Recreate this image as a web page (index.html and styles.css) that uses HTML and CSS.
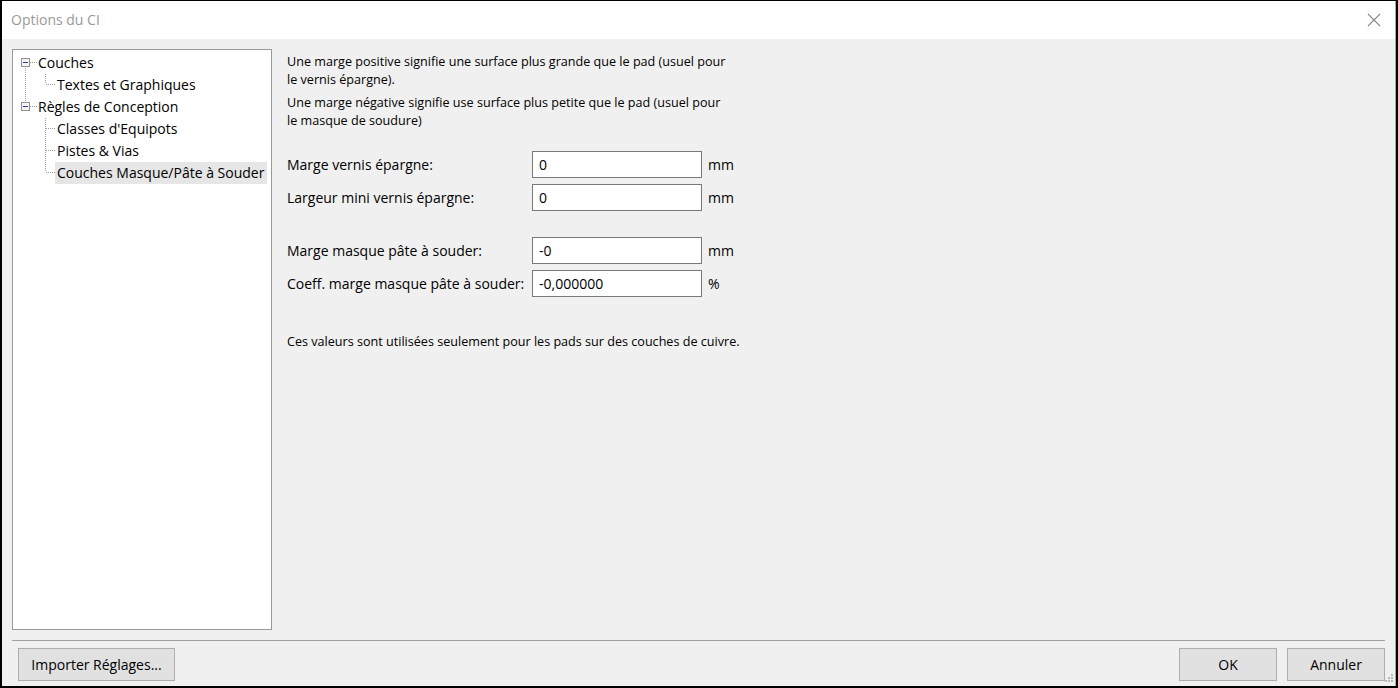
FILE: index.html
```html
<!DOCTYPE html>
<html lang="fr">
<head>
<meta charset="utf-8">
<title>Options du CI</title>
<link rel="stylesheet" href="styles.css">
</head>
<body>
<div class="window">
  <div class="titlebar">
    <span class="title">Options du CI</span>
    <svg class="close" width="14" height="14" viewBox="0 0 14 14"><path d="M1 1 L13 13 M13 1 L1 13" stroke="#8a8a8a" stroke-width="1.1" fill="none"/></svg>
  </div>
  <div class="main">
    <div class="tree">
      <div class="row">
        <svg class="lines top" width="25" height="22" viewBox="0 0 25 22" shape-rendering="crispEdges">
          <rect x="8.5" y="6.5" width="8" height="8" fill="#f4f4f4" stroke="#919191"/>
          <line x1="10" y1="10.5" x2="15" y2="10.5" stroke="#2a3f8f"/>
          <line x1="17" y1="10.5" x2="24" y2="10.5" stroke="#a0a0a0" stroke-dasharray="1 1"/>
          <line x1="12.5" y1="16" x2="12.5" y2="22" stroke="#a0a0a0" stroke-dasharray="1 1"/>
        </svg>
        <span class="label">Couches</span>
      </div>
      <div class="row">
        <svg class="lines" width="44" height="22" viewBox="0 0 44 22" shape-rendering="crispEdges">
          <line x1="12.5" y1="0" x2="12.5" y2="22" stroke="#a0a0a0" stroke-dasharray="1 1"/>
          <line x1="32.5" y1="0" x2="32.5" y2="10" stroke="#a0a0a0" stroke-dasharray="1 1"/>
          <line x1="33" y1="10.5" x2="42" y2="10.5" stroke="#a0a0a0" stroke-dasharray="1 1"/>
        </svg>
        <span class="label">Textes et Graphiques</span>
      </div>
      <div class="row">
        <svg class="lines top" width="25" height="22" viewBox="0 0 25 22" shape-rendering="crispEdges">
          <line x1="12.5" y1="0" x2="12.5" y2="6" stroke="#a0a0a0" stroke-dasharray="1 1"/>
          <rect x="8.5" y="6.5" width="8" height="8" fill="#f4f4f4" stroke="#919191"/>
          <line x1="10" y1="10.5" x2="15" y2="10.5" stroke="#2a3f8f"/>
          <line x1="17" y1="10.5" x2="24" y2="10.5" stroke="#a0a0a0" stroke-dasharray="1 1"/>
        </svg>
        <span class="label">Règles de Conception</span>
      </div>
      <div class="row">
        <svg class="lines" width="44" height="22" viewBox="0 0 44 22" shape-rendering="crispEdges">
          <line x1="32.5" y1="0" x2="32.5" y2="22" stroke="#a0a0a0" stroke-dasharray="1 1"/>
          <line x1="33" y1="10.5" x2="42" y2="10.5" stroke="#a0a0a0" stroke-dasharray="1 1"/>
        </svg>
        <span class="label">Classes d'Equipots</span>
      </div>
      <div class="row">
        <svg class="lines" width="44" height="22" viewBox="0 0 44 22" shape-rendering="crispEdges">
          <line x1="32.5" y1="0" x2="32.5" y2="22" stroke="#a0a0a0" stroke-dasharray="1 1"/>
          <line x1="33" y1="10.5" x2="42" y2="10.5" stroke="#a0a0a0" stroke-dasharray="1 1"/>
        </svg>
        <span class="label">Pistes &amp; Vias</span>
      </div>
      <div class="row">
        <svg class="lines" width="44" height="22" viewBox="0 0 44 22" shape-rendering="crispEdges">
          <line x1="32.5" y1="0" x2="32.5" y2="10" stroke="#a0a0a0" stroke-dasharray="1 1"/>
          <line x1="33" y1="10.5" x2="42" y2="10.5" stroke="#a0a0a0" stroke-dasharray="1 1"/>
        </svg>
        <span class="label selected">Couches Masque/Pâte à Souder</span>
      </div>
    </div>
    <div class="panel">
      <p class="note">Une marge positive signifie une surface plus grande que le pad (usuel pour<br>le vernis épargne).</p>
      <p class="note second">Une marge négative signifie use surface plus petite que le pad (usuel pour<br>le masque de soudure)</p>
      <div class="form first">
        <label>Marge vernis épargne:</label><input type="text" value="0"><span class="unit">mm</span>
        <label>Largeur mini vernis épargne:</label><input type="text" value="0"><span class="unit">mm</span>
      </div>
      <div class="form group2">
        <label>Marge masque pâte à souder:</label><input type="text" value="-0"><span class="unit">mm</span>
        <label>Coeff. marge masque pâte à souder:</label><input type="text" value="-0,000000"><span class="unit">%</span>
      </div>
      <p class="note foot">Ces valeurs sont utilisées seulement pour les pads sur des couches de cuivre.</p>
    </div>
  </div>
  <div class="sep"></div>
  <div class="footer">
    <button class="btn import">Importer Réglages...</button>
    <div class="spacer"></div>
    <button class="btn">OK</button>
    <button class="btn">Annuler</button>
    <svg class="grip" width="12" height="12" viewBox="0 0 12 12" shape-rendering="crispEdges">
      <rect x="9" y="1" width="2" height="2" fill="#b8b8b8"/>
      <rect x="6" y="4" width="2" height="2" fill="#b8b8b8"/>
      <rect x="9" y="4" width="2" height="2" fill="#b8b8b8"/>
      <rect x="3" y="7" width="2" height="2" fill="#b8b8b8"/>
      <rect x="6" y="7" width="2" height="2" fill="#b8b8b8"/>
      <rect x="9" y="7" width="2" height="2" fill="#b8b8b8"/>
    </svg>
  </div>
</div>
</body>
</html>
```

FILE: styles.css
```css
html, body {
  margin: 0;
  padding: 0;
  background: #000;
  width: 1398px;
  height: 688px;
  overflow: hidden;
}
body {
  font-family: "Open Sans", "Noto Sans", sans-serif;
  color: #000;
}
.window {
  margin: 1px 0 0 2px;
  width: 1393px;
  height: 685px;
  background: #f0f0f0;
  border-right: 1px solid #a8a8a8;
  display: flex;
  flex-direction: column;
  position: relative;
}
.titlebar {
  height: 38px;
  background: #fff;
  display: flex;
  align-items: center;
  padding: 0 14px 0 9px;
  flex: none;
}
.title {
  font-size: 14px;
  color: #999;
  flex: 1;
  padding-bottom: 1px;
}
.close {
  display: block;
}
.main {
  flex: 1;
  display: flex;
  padding: 10px 10px 0 10px;
  min-height: 0;
}
.tree {
  width: 258px;
  height: 577px;
  background: #fff;
  border: 1px solid #9a9a9a;
  padding-top: 2px;
  box-sizing: content-box;
  flex: none;
}
.row {
  display: flex;
  height: 22px;
  align-items: center;
}
.lines {
  display: block;
  flex: none;
}
.label {
  font-size: 14px;
  line-height: 22px;
  white-space: nowrap;
  padding: 0;
}
.label.selected {
  background: #e6e6e6;
  margin-left: -2px;
  padding-left: 2px;
  width: 210px;
}
.panel {
  padding: 4px 0 0 15px;
  flex: 1;
}
.note {
  margin: 0;
  font-size: 12.6px;
  line-height: 18px;
}
.note.second {
  margin-top: 5px;
}
.form {
  display: grid;
  grid-template-columns: 245px 170px auto;
  grid-auto-rows: 27px;
  row-gap: 6px;
  align-items: center;
}
.form.first {
  margin-top: 21px;
}
.form.group2 {
  margin-top: 26px;
}
.form label {
  font-size: 14px;
  white-space: nowrap;
}
.form input {
  box-sizing: border-box;
  width: 170px;
  height: 27px;
  border: 1px solid #7a7a7a;
  background: #fff;
  font-family: "Open Sans", "Noto Sans", sans-serif;
  font-size: 14px;
  padding: 0 6px;
  margin: 0;
  outline: none;
  color: #000;
}
.unit {
  font-size: 14px;
  padding-left: 6px;
}
.note.foot {
  margin-top: 36px;
}
.sep {
  flex: none;
  height: 1px;
  background: #a0a0a0;
  margin: 10px 10px 0 10px;
}
.footer {
  flex: none;
  height: 45px;
  display: flex;
  align-items: flex-start;
  padding: 7px 10px 0 16px;
  box-sizing: border-box;
  gap: 10px;
}
.spacer {
  flex: 1;
}
.btn {
  height: 33px;
  width: 98px;
  background: #e1e1e1;
  border: 1px solid #adadad;
  font-family: "Open Sans", "Noto Sans", sans-serif;
  font-size: 14px;
  color: #000;
  padding: 0;
  margin: 0;
}
.btn.import {
  width: 157px;
}
.grip {
  position: absolute;
  right: 1px;
  bottom: 1px;
}
```
